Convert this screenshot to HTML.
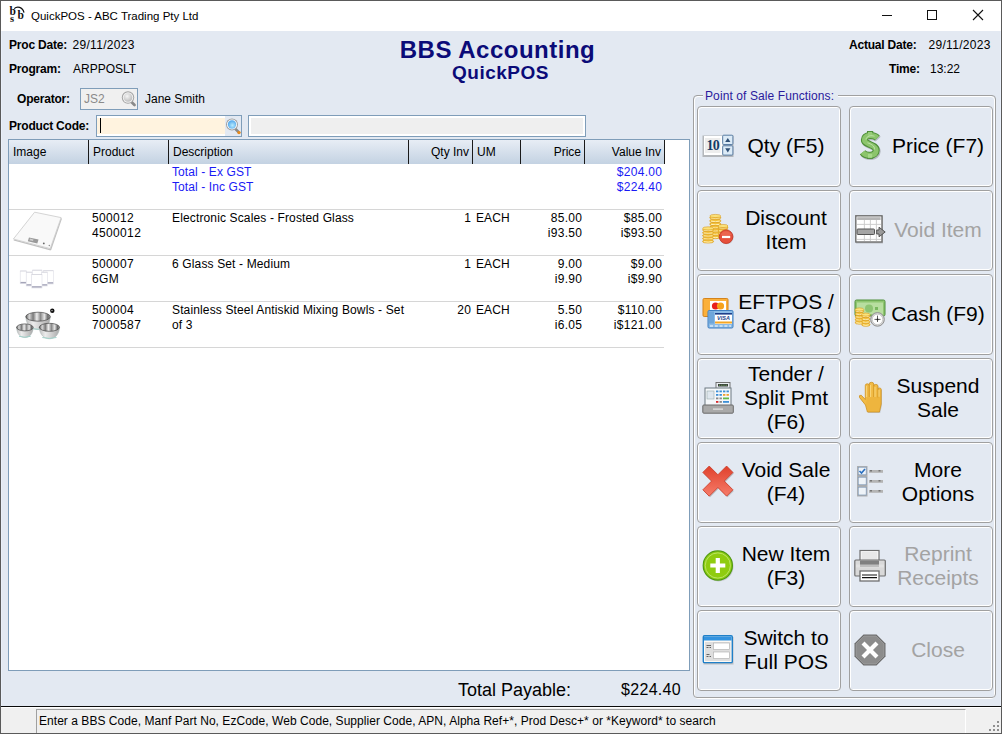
<!DOCTYPE html>
<html><head><meta charset="utf-8"><style>
html,body{margin:0;padding:0;width:1002px;height:734px;overflow:hidden;background:#5a5a5a}
body{position:relative;font-family:"Liberation Sans",sans-serif}
.t{position:absolute;white-space:nowrap;font-family:"Liberation Sans",sans-serif}
svg{overflow:visible}
</style></head><body>
<div style="position:absolute;left:0px;top:0px;width:1002px;height:734px;background:#5a5a5a"></div>
<div style="position:absolute;left:1px;top:1px;width:1000px;height:30px;background:#fff"></div>
<div style="position:absolute;left:1px;top:31px;width:1000px;height:675px;background:#E3E9F2;border-left:1px solid #EAF0FA;border-right:1px solid #EAF0FA;box-sizing:border-box"></div>
<div style="position:absolute;left:1px;top:706px;width:1000px;height:1px;background:#0a0a0a"></div>
<div style="position:absolute;left:1px;top:707px;width:1000px;height:26px;background:#F0F0F0;border-top:1px solid #fff;box-sizing:border-box"></div>
<div class="t" style="left:31px;top:9px;font-size:11.5px;line-height:14px;color:#000;">QuickPOS - ABC Trading Pty Ltd</div>
<svg style="position:absolute;left:0px;top:0px" width="30" height="30" viewBox="0 0 30 30">
<g font-family="Liberation Serif" font-weight="bold" fill="#111">
<text x="9.6" y="14.8" font-size="11.5">b</text>
<text x="10" y="22" font-size="10.5">s</text>
<text x="17.6" y="18.9" font-size="11.5">b</text>
</g>
<path d="M14.2 8.6 C17 6 22.5 6.5 24 12.6" fill="none" stroke="#111" stroke-width="1.2"/>
</svg>
<div style="position:absolute;left:882px;top:15px;width:10px;height:1px;background:#111"></div>
<div style="position:absolute;left:927px;top:10px;width:10px;height:10px;border:1px solid #111;box-sizing:border-box"></div>
<svg style="position:absolute;left:972px;top:9px" width="12" height="12" viewBox="0 0 12 12"><path d="M1 1 L11 11 M11 1 L1 11" stroke="#111" stroke-width="1.1"/></svg>
<div class="t" style="left:9px;top:38px;font-size:12px;line-height:14px;font-weight:bold;color:#000;letter-spacing:-0.2px">Proc Date:</div>
<div class="t" style="left:72.5px;top:38px;font-size:12px;line-height:14px;color:#000;;letter-spacing:0.3px">29/11/2023</div>
<div class="t" style="left:9px;top:62px;font-size:12px;line-height:14px;font-weight:bold;color:#000;letter-spacing:-0.2px">Program:</div>
<div class="t" style="left:73px;top:62px;font-size:12px;line-height:14px;color:#000;">ARPPOSLT</div>
<div class="t" style="left:197.5px;width:600px;text-align:center;top:35px;font-size:24px;line-height:29px;font-weight:bold;color:#0b0b78;letter-spacing:0.5px">BBS Accounting</div>
<div class="t" style="left:200.5px;width:600px;text-align:center;top:61px;font-size:19px;line-height:23px;font-weight:bold;color:#0b0b78;letter-spacing:0.5px">QuickPOS</div>
<div class="t" style="left:849px;top:38px;font-size:12px;line-height:14px;font-weight:bold;color:#000;letter-spacing:-0.2px">Actual Date:</div>
<div class="t" style="left:928.5px;top:38px;font-size:12px;line-height:14px;color:#000;;letter-spacing:0.3px">29/11/2023</div>
<div class="t" style="left:889px;top:62px;font-size:12px;line-height:14px;font-weight:bold;color:#000;letter-spacing:-0.2px">Time:</div>
<div class="t" style="left:930px;top:62px;font-size:12px;line-height:14px;color:#000;">13:22</div>
<div class="t" style="left:17px;top:92px;font-size:12px;line-height:14px;font-weight:bold;color:#000;letter-spacing:-0.2px">Operator:</div>
<div style="position:absolute;left:80px;top:88px;width:58px;height:22px;border:1px solid #7F9DB9;background:#F0F0F0;box-sizing:border-box"></div>
<div class="t" style="left:84px;top:92px;font-size:12px;line-height:14px;color:#8a8a8a;">JS2</div>
<svg style="position:absolute;left:120px;top:90px" width="17" height="18" viewBox="0 0 17 18">
<defs><radialGradient id="gg" cx="0.4" cy="0.35" r="0.75"><stop offset="0" stop-color="#f6f6f6"/><stop offset="1" stop-color="#b4b4b4"/></radialGradient></defs>
<path d="M11.5 12 L14.5 15" stroke="#8a8a8a" stroke-width="2.8" stroke-linecap="round"/>
<circle cx="8" cy="7.5" r="6.2" fill="#a3a3a3"/>
<circle cx="8" cy="7.5" r="5.2" fill="#f3f3f3"/>
<circle cx="8" cy="7.5" r="4.3" fill="url(#gg)"/></svg>
<div class="t" style="left:145px;top:92px;font-size:12px;line-height:14px;color:#000;">Jane Smith</div>
<div class="t" style="left:9px;top:119px;font-size:12px;line-height:14px;font-weight:bold;color:#000;letter-spacing:-0.2px">Product Code:</div>
<div style="position:absolute;left:96px;top:115px;width:146px;height:22px;border:1px solid #7F9DB9;background:#fff;box-sizing:border-box"></div>
<div style="position:absolute;left:97px;top:118px;width:128px;height:16px;background:#FFF3DF"></div>
<div style="position:absolute;left:225px;top:116px;width:16px;height:20px;background:#E3E9F2"></div>
<div style="position:absolute;left:100px;top:118px;width:1px;height:15px;background:#000"></div>
<svg style="position:absolute;left:224px;top:117px" width="17" height="18" viewBox="0 0 17 18">
<defs><radialGradient id="bg1" cx="0.55" cy="0.6" r="0.7"><stop offset="0" stop-color="#b8ecff"/><stop offset="1" stop-color="#3d98e6"/></radialGradient></defs>
<path d="M11.5 12 L14.5 15" stroke="#8a8a8a" stroke-width="2.6" stroke-linecap="round"/>
<circle cx="15" cy="15.6" r="1.7" fill="#e88a1a"/>
<circle cx="8" cy="7.5" r="6" fill="#a0a0a0"/>
<circle cx="8" cy="7.5" r="5" fill="#fff"/>
<circle cx="8" cy="7.5" r="4.2" fill="url(#bg1)"/></svg>
<div style="position:absolute;left:248px;top:115px;width:338px;height:22px;border:1px solid #7F9DB9;background:#fff;box-sizing:border-box"></div>
<div style="position:absolute;left:251px;top:118px;width:332px;height:16px;background:#EFEFEF"></div>
<div style="position:absolute;left:8px;top:139px;width:682px;height:532px;border:1px solid #7F9DB9;background:#fff;box-sizing:border-box"></div>
<div style="position:absolute;left:9px;top:140px;width:655px;height:24px;background:linear-gradient(#E7EDF5,#C3D2E2)"></div>
<div style="position:absolute;left:88px;top:140px;width:1px;height:24px;background:#1a1a1a"></div>
<div style="position:absolute;left:168px;top:140px;width:1px;height:24px;background:#1a1a1a"></div>
<div style="position:absolute;left:408px;top:140px;width:1px;height:24px;background:#1a1a1a"></div>
<div style="position:absolute;left:472px;top:140px;width:1px;height:24px;background:#1a1a1a"></div>
<div style="position:absolute;left:520px;top:140px;width:1px;height:24px;background:#1a1a1a"></div>
<div style="position:absolute;left:584px;top:140px;width:1px;height:24px;background:#1a1a1a"></div>
<div style="position:absolute;left:664px;top:140px;width:1px;height:24px;background:#1a1a1a"></div>
<div class="t" style="left:13px;top:145px;font-size:12px;line-height:14px;color:#000;">Image</div>
<div class="t" style="left:93px;top:145px;font-size:12px;line-height:14px;color:#000;">Product</div>
<div class="t" style="left:173px;top:145px;font-size:12px;line-height:14px;color:#000;">Description</div>
<div class="t" style="right:533px;top:145px;font-size:12px;line-height:14px;color:#000;">Qty Inv</div>
<div class="t" style="left:477px;top:145px;font-size:12px;line-height:14px;color:#000;">UM</div>
<div class="t" style="right:421px;top:145px;font-size:12px;line-height:14px;color:#000;">Price</div>
<div class="t" style="right:341px;top:145px;font-size:12px;line-height:14px;color:#000;">Value Inv</div>
<div class="t" style="left:172px;top:165px;font-size:12px;line-height:14px;color:#1a1af5;;letter-spacing:0.1px">Total - Ex GST</div>
<div class="t" style="left:172px;top:180px;font-size:12px;line-height:14px;color:#1a1af5;;letter-spacing:0.1px">Total - Inc GST</div>
<div class="t" style="right:339.7px;top:165px;font-size:12px;line-height:14px;color:#1a1af5;;letter-spacing:0.3px">$204.00</div>
<div class="t" style="right:339.7px;top:180px;font-size:12px;line-height:14px;color:#1a1af5;;letter-spacing:0.3px">$224.40</div>
<div style="position:absolute;left:9px;top:209px;width:655px;height:1px;background:#D6D6D6"></div>
<div style="position:absolute;left:9px;top:255px;width:655px;height:1px;background:#D6D6D6"></div>
<div style="position:absolute;left:9px;top:301px;width:655px;height:1px;background:#D6D6D6"></div>
<div style="position:absolute;left:9px;top:347px;width:655px;height:1px;background:#D6D6D6"></div>
<div class="t" style="left:92px;top:211px;font-size:12px;line-height:14px;color:#000;;letter-spacing:0.35px">500012</div>
<div class="t" style="left:92px;top:226px;font-size:12px;line-height:14px;color:#000;;letter-spacing:0.35px">4500012</div>
<div class="t" style="left:172px;top:211px;font-size:12px;line-height:14px;color:#000;;letter-spacing:0.14px">Electronic Scales - Frosted Glass</div>
<div class="t" style="right:530.7px;top:211px;font-size:12px;line-height:14px;color:#000;;letter-spacing:0.3px">1</div>
<div class="t" style="left:476px;top:211px;font-size:12px;line-height:14px;color:#000;;letter-spacing:0.1px">EACH</div>
<div class="t" style="right:419.7px;top:211px;font-size:12px;line-height:14px;color:#000;;letter-spacing:0.3px">85.00</div>
<div class="t" style="right:419.7px;top:226px;font-size:12px;line-height:14px;color:#000;;letter-spacing:0.3px">i93.50</div>
<div class="t" style="right:339.7px;top:211px;font-size:12px;line-height:14px;color:#000;;letter-spacing:0.3px">$85.00</div>
<div class="t" style="right:339.7px;top:226px;font-size:12px;line-height:14px;color:#000;;letter-spacing:0.3px">i$93.50</div>
<div class="t" style="left:92px;top:257px;font-size:12px;line-height:14px;color:#000;;letter-spacing:0.35px">500007</div>
<div class="t" style="left:92px;top:272px;font-size:12px;line-height:14px;color:#000;;letter-spacing:0.35px">6GM</div>
<div class="t" style="left:172px;top:257px;font-size:12px;line-height:14px;color:#000;;letter-spacing:0.14px">6 Glass Set - Medium</div>
<div class="t" style="right:530.7px;top:257px;font-size:12px;line-height:14px;color:#000;;letter-spacing:0.3px">1</div>
<div class="t" style="left:476px;top:257px;font-size:12px;line-height:14px;color:#000;;letter-spacing:0.1px">EACH</div>
<div class="t" style="right:419.7px;top:257px;font-size:12px;line-height:14px;color:#000;;letter-spacing:0.3px">9.00</div>
<div class="t" style="right:419.7px;top:272px;font-size:12px;line-height:14px;color:#000;;letter-spacing:0.3px">i9.90</div>
<div class="t" style="right:339.7px;top:257px;font-size:12px;line-height:14px;color:#000;;letter-spacing:0.3px">$9.00</div>
<div class="t" style="right:339.7px;top:272px;font-size:12px;line-height:14px;color:#000;;letter-spacing:0.3px">i$9.90</div>
<div class="t" style="left:92px;top:303px;font-size:12px;line-height:14px;color:#000;;letter-spacing:0.35px">500004</div>
<div class="t" style="left:92px;top:318px;font-size:12px;line-height:14px;color:#000;;letter-spacing:0.35px">7000587</div>
<div class="t" style="left:172px;top:303px;font-size:12px;line-height:14px;color:#000;;letter-spacing:0.14px">Stainless Steel Antiskid Mixing Bowls - Set</div>
<div class="t" style="left:172px;top:318px;font-size:12px;line-height:14px;color:#000;;letter-spacing:0.14px">of 3</div>
<div class="t" style="right:530.7px;top:303px;font-size:12px;line-height:14px;color:#000;;letter-spacing:0.3px">20</div>
<div class="t" style="left:476px;top:303px;font-size:12px;line-height:14px;color:#000;;letter-spacing:0.1px">EACH</div>
<div class="t" style="right:419.7px;top:303px;font-size:12px;line-height:14px;color:#000;;letter-spacing:0.3px">5.50</div>
<div class="t" style="right:419.7px;top:318px;font-size:12px;line-height:14px;color:#000;;letter-spacing:0.3px">i6.05</div>
<div class="t" style="right:339.7px;top:303px;font-size:12px;line-height:14px;color:#000;;letter-spacing:0.3px">$110.00</div>
<div class="t" style="right:339.7px;top:318px;font-size:12px;line-height:14px;color:#000;;letter-spacing:0.3px">i$121.00</div>
<svg style="position:absolute;left:12px;top:210px" width="52" height="42" viewBox="0 0 52 42">
<path d="M1.8 29.8 L38.2 39.6 L49.4 8.4 L38.6 39.8" fill="none" stroke="#c0c0c0" stroke-width="1.3"/>
<path d="M22.6 2.2 L49.1 7.6 L38.2 38.6 L1.4 29 Z" fill="#f9f9f9" stroke="#cfcfcf" stroke-width="0.9"/>
<path d="M17 27.5 L26.5 29.6 L25.3 33.4 L15.8 31.2 Z" fill="#9a9a9a"/>
<path d="M18 28.6 L21.5 29.4 L21 31 L17.5 30.2 Z" fill="#d0d0d0"/>
<circle cx="31.8" cy="33.4" r="0.9" fill="#666"/><circle cx="37.3" cy="35.5" r="0.7" fill="#888"/>
</svg>
<svg style="position:absolute;left:18px;top:266px" width="40" height="28" viewBox="0 0 40 28"><rect x="2.2" y="5" width="6.3" height="12.7" fill="#fff" stroke="#dedee6" stroke-width="0.6"/><rect x="2.5" y="15.899999999999999" width="5.7" height="1.4" fill="#a4a4b8"/><path d="M2.2 5 H8.5" stroke="#d2d2da" stroke-width="0.7"/><rect x="14.5" y="4.2" width="9.5" height="11.8" fill="#fff" stroke="#dedee6" stroke-width="0.6"/><rect x="14.8" y="14.2" width="8.9" height="1.4" fill="#a4a4b8"/><path d="M14.5 4.2 H24" stroke="#d2d2da" stroke-width="0.7"/><rect x="25.4" y="4.7" width="10.0" height="13.3" fill="#fff" stroke="#dedee6" stroke-width="0.6"/><rect x="25.7" y="16.2" width="9.4" height="1.4" fill="#a4a4b8"/><path d="M25.4 4.7 H35.4" stroke="#d2d2da" stroke-width="0.7"/><rect x="8.2" y="6.2" width="5.800000000000001" height="13.8" fill="#fff" stroke="#dedee6" stroke-width="0.6"/><rect x="8.5" y="18.2" width="5.200000000000001" height="1.4" fill="#a4a4b8"/><path d="M8.2 6.2 H14" stroke="#d2d2da" stroke-width="0.7"/><rect x="23.7" y="6.2" width="5.699999999999999" height="13.8" fill="#fff" stroke="#dedee6" stroke-width="0.6"/><rect x="24.0" y="18.2" width="5.1" height="1.4" fill="#a4a4b8"/><path d="M23.7 6.2 H29.4" stroke="#d2d2da" stroke-width="0.7"/><rect x="13.7" y="8.5" width="10.3" height="13.5" fill="#fff" stroke="#dedee6" stroke-width="0.6"/><rect x="14.0" y="20.2" width="9.700000000000001" height="1.4" fill="#a4a4b8"/><path d="M13.7 8.5 H24" stroke="#d2d2da" stroke-width="0.7"/></svg>
<svg style="position:absolute;left:14px;top:306px" width="48" height="36" viewBox="0 0 48 36"><defs><linearGradient id="bo" x1="0" y1="0" x2="1" y2="0"><stop offset="0" stop-color="#bdbdbd"/><stop offset="0.3" stop-color="#ececec"/><stop offset="0.6" stop-color="#d0d0d0"/><stop offset="1" stop-color="#a8a8a8"/></linearGradient><linearGradient id="bi" x1="0" y1="0" x2="1" y2="0"><stop offset="0" stop-color="#5a5a5a"/><stop offset="0.14" stop-color="#d8d8d8"/><stop offset="0.3" stop-color="#7a7a7a"/><stop offset="0.45" stop-color="#eeeeee"/><stop offset="0.6" stop-color="#8a8a8a"/><stop offset="0.76" stop-color="#e6e6e6"/><stop offset="0.9" stop-color="#6a6a6a"/><stop offset="1" stop-color="#a8a8a8"/></linearGradient></defs><circle cx="38.3" cy="4.8" r="2.2" fill="#111"/><circle cx="38" cy="4.6" r="0.7" fill="#ddd"/><path d="M11.8 10.7 C12.200000000000001 27.90 35.9 27.90 36.3 10.7 Z" fill="url(#bo)" stroke="#a8b4b4" stroke-width="0.5"/><path d="M15.48 22.30 Q24.05 24.20 32.62 22.30" stroke="#9fd0c8" stroke-width="1" fill="none"/><ellipse cx="24.05" cy="10.7" rx="12.25" ry="4.5" fill="url(#bi)" stroke="#4a4a4a" stroke-width="0.7"/><path d="M2.5999999999999996 21.4 C2.9999999999999996 35.00 18.800000000000004 35.00 19.200000000000003 21.4 Z" fill="url(#bo)" stroke="#a8b4b4" stroke-width="0.5"/><path d="M5.09 30.30 Q10.9 32.20 16.71 30.30" stroke="#9fd0c8" stroke-width="1" fill="none"/><ellipse cx="10.9" cy="21.4" rx="8.3" ry="3.5" fill="url(#bi)" stroke="#4a4a4a" stroke-width="0.7"/><path d="M25.299999999999997 21.3 C25.699999999999996 36.63 45.1 36.63 45.5 21.3 Z" fill="url(#bo)" stroke="#a8b4b4" stroke-width="0.5"/><path d="M28.33 31.50 Q35.4 33.40 42.47 31.50" stroke="#9fd0c8" stroke-width="1" fill="none"/><ellipse cx="35.4" cy="21.3" rx="10.1" ry="4" fill="url(#bi)" stroke="#4a4a4a" stroke-width="0.7"/></svg>
<div class="t" style="left:458px;top:679px;font-size:18px;line-height:22px;color:#000;">Total Payable:</div>
<div class="t" style="right:321px;top:680px;font-size:16px;line-height:19px;color:#000;letter-spacing:0.3px">$224.40</div>
<div style="position:absolute;left:36px;top:709px;width:930px;height:24px;border-top:1px solid #A0A0A0;border-left:1px solid #A0A0A0;border-right:1px solid #fff;box-sizing:border-box;background:#F0F0F0"></div>
<div class="t" style="left:39px;top:714px;font-size:12px;line-height:14px;color:#000;letter-spacing:0.04px">Enter a BBS Code, Manf Part No, EzCode, Web Code, Supplier Code, APN, Alpha Ref+*, Prod Desc+* or *Keyword* to search</div>
<div style="position:absolute;left:997px;top:721px;width:2px;height:2px;background:#8f8f8f"></div>
<div style="position:absolute;left:993px;top:725px;width:2px;height:2px;background:#8f8f8f"></div>
<div style="position:absolute;left:997px;top:725px;width:2px;height:2px;background:#8f8f8f"></div>
<div style="position:absolute;left:989px;top:729px;width:2px;height:2px;background:#8f8f8f"></div>
<div style="position:absolute;left:993px;top:729px;width:2px;height:2px;background:#8f8f8f"></div>
<div style="position:absolute;left:997px;top:729px;width:2px;height:2px;background:#8f8f8f"></div>
<div style="position:absolute;left:694px;top:96px;width:301px;height:603px;border:1px solid #fff;border-radius:4px;box-sizing:border-box"></div>
<div style="position:absolute;left:693px;top:95px;width:303px;height:603px;border:1px solid #A0A0A0;border-radius:4px;box-sizing:border-box"></div>
<div style="position:absolute;left:703px;top:88px;width:135px;height:14px;background:#E3E9F2"></div>
<div class="t" style="left:705px;top:89px;font-size:12px;line-height:14px;color:#2a1a9c;letter-spacing:0.1px">Point of Sale Functions:</div>
<div style="position:absolute;left:697px;top:106px;width:144px;height:81px;border:1px solid #A0A0A0;border-radius:4px;box-shadow:inset 1px 1px 0 #fff, inset -1px -1px 0 #fff;box-sizing:border-box"></div>
<div class="t" style="left:726px;width:120px;text-align:center;top:133.5px;font-size:21px;line-height:24px;color:#000">Qty (F5)</div>
<svg style="position:absolute;left:702px;top:130px" width="32" height="32" viewBox="0 0 32 32">
<rect x="0.5" y="5.5" width="31" height="21.5" fill="#8e8e8e" opacity="0.55"/>
<rect x="2" y="6" width="18.5" height="19" fill="#fff"/>
<rect x="3" y="8" width="15.5" height="15" fill="#e6e6e6" opacity="0.7"/>
<text x="10.8" y="20" text-anchor="middle" font-family="Liberation Serif" font-weight="bold" font-size="14" fill="#123a66" letter-spacing="-0.6">10</text>
<rect x="20.7" y="5.2" width="10.2" height="9.3" rx="1" fill="#dcebf7" stroke="#5b7ea5" stroke-width="1"/>
<rect x="20.7" y="15.8" width="10.2" height="9.3" rx="1" fill="#dcebf7" stroke="#5b7ea5" stroke-width="1"/>
<path d="M23.2 12 L25.8 8 L28.4 12 Z" fill="#2f4f75"/>
<path d="M23.2 18.2 L25.8 22.4 L28.4 18.2 Z" fill="#2f4f75"/>
</svg>
<div style="position:absolute;left:849px;top:106px;width:144px;height:81px;border:1px solid #A0A0A0;border-radius:4px;box-shadow:inset 1px 1px 0 #fff, inset -1px -1px 0 #fff;box-sizing:border-box"></div>
<div class="t" style="left:878px;width:120px;text-align:center;top:133.5px;font-size:21px;line-height:24px;color:#000">Price (F7)</div>
<svg style="position:absolute;left:854px;top:130px" width="32" height="32" viewBox="0 0 32 32">
<path d="M23.2 8 C20 4.6 10.8 4.4 10.4 9.8 C10 14.8 22.4 14.2 22.2 20.3 C22 26.4 12 26.6 8.6 22.3" transform="translate(1,1.2)" opacity="0.2" fill="none" stroke="#000" stroke-width="7"/>
<rect x="13" y="1" width="6.2" height="5" fill="#4f8f3a"/>
<rect x="13" y="23.8" width="6.2" height="5" fill="#4f8f3a"/>
<path d="M23.2 8 C20 4.6 10.8 4.4 10.4 9.8 C10 14.8 22.4 14.2 22.2 20.3 C22 26.4 12 26.6 8.6 22.3" fill="none" stroke="#4f8f3a" stroke-width="7"/>
<path d="M23.2 8 C20 4.6 10.8 4.4 10.4 9.8 C10 14.8 22.4 14.2 22.2 20.3 C22 26.4 12 26.6 8.6 22.3" fill="none" stroke="#8cc56c" stroke-width="5"/>
<rect x="14" y="2" width="4.2" height="4" fill="#98cd7a"/>
<rect x="14" y="24" width="4.2" height="3.8" fill="#a6d889"/>
<path d="M20.5 6.2 C17 5.2 12.5 5.8 12 9.5 M13.5 12.8 C17 14 20.6 15.5 20.6 19.5" fill="none" stroke="#d8f0c8" stroke-width="0.8" opacity="0.8"/>
</svg>
<div style="position:absolute;left:697px;top:190px;width:144px;height:81px;border:1px solid #A0A0A0;border-radius:4px;box-shadow:inset 1px 1px 0 #fff, inset -1px -1px 0 #fff;box-sizing:border-box"></div>
<div class="t" style="left:726px;width:120px;text-align:center;top:205.5px;font-size:21px;line-height:24px;color:#000">Discount<br>Item</div>
<svg style="position:absolute;left:702px;top:214px" width="32" height="32" viewBox="0 0 32 32"><rect x="7.8" y="1.90" width="11" height="3.60" rx="5.50" ry="1.4" fill="#f3c13c" stroke="#d99a1e" stroke-width="0.6"/><path d="M9.0 3.88 Q13.3 5.10 17.6 3.88" stroke="#fff6c8" stroke-width="0.9" fill="none"/><rect x="7.8" y="5.10" width="11" height="3.60" rx="5.50" ry="1.4" fill="#f3c13c" stroke="#d99a1e" stroke-width="0.6"/><path d="M9.0 7.08 Q13.3 8.30 17.6 7.08" stroke="#fff6c8" stroke-width="0.9" fill="none"/><rect x="7.8" y="8.30" width="11" height="3.60" rx="5.50" ry="1.4" fill="#f3c13c" stroke="#d99a1e" stroke-width="0.6"/><path d="M9.0 10.28 Q13.3 11.50 17.6 10.28" stroke="#fff6c8" stroke-width="0.9" fill="none"/><rect x="7.8" y="11.50" width="11" height="3.60" rx="5.50" ry="1.4" fill="#f3c13c" stroke="#d99a1e" stroke-width="0.6"/><path d="M9.0 13.48 Q13.3 14.70 17.6 13.48" stroke="#fff6c8" stroke-width="0.9" fill="none"/><rect x="7.8" y="14.70" width="11" height="3.60" rx="5.50" ry="1.4" fill="#f3c13c" stroke="#d99a1e" stroke-width="0.6"/><path d="M9.0 16.68 Q13.3 17.90 17.6 16.68" stroke="#fff6c8" stroke-width="0.9" fill="none"/><rect x="7.8" y="17.90" width="11" height="3.60" rx="5.50" ry="1.4" fill="#f3c13c" stroke="#d99a1e" stroke-width="0.6"/><path d="M9.0 19.88 Q13.3 21.10 17.6 19.88" stroke="#fff6c8" stroke-width="0.9" fill="none"/><rect x="7.8" y="21.10" width="11" height="3.60" rx="5.50" ry="1.4" fill="#f3c13c" stroke="#d99a1e" stroke-width="0.6"/><path d="M9.0 23.08 Q13.3 24.30 17.6 23.08" stroke="#fff6c8" stroke-width="0.9" fill="none"/><ellipse cx="13.3" cy="2.0" rx="5.5" ry="1.6" fill="#fbe27a" stroke="#d99a1e" stroke-width="0.6"/><rect x="16" y="11.90" width="10" height="3.42" rx="5.00" ry="1.4" fill="#f3c13c" stroke="#d99a1e" stroke-width="0.6"/><path d="M17.2 13.78 Q21.0 14.93 24.8 13.78" stroke="#fff6c8" stroke-width="0.9" fill="none"/><rect x="16" y="14.93" width="10" height="3.42" rx="5.00" ry="1.4" fill="#f3c13c" stroke="#d99a1e" stroke-width="0.6"/><path d="M17.2 16.80 Q21.0 17.95 24.8 16.80" stroke="#fff6c8" stroke-width="0.9" fill="none"/><rect x="16" y="17.95" width="10" height="3.42" rx="5.00" ry="1.4" fill="#f3c13c" stroke="#d99a1e" stroke-width="0.6"/><path d="M17.2 19.83 Q21.0 20.97 24.8 19.83" stroke="#fff6c8" stroke-width="0.9" fill="none"/><rect x="16" y="20.98" width="10" height="3.42" rx="5.00" ry="1.4" fill="#f3c13c" stroke="#d99a1e" stroke-width="0.6"/><path d="M17.2 22.85 Q21.0 24.00 24.8 22.85" stroke="#fff6c8" stroke-width="0.9" fill="none"/><ellipse cx="21.0" cy="12.0" rx="5.0" ry="1.6" fill="#fbe27a" stroke="#d99a1e" stroke-width="0.6"/><rect x="0.6" y="14.30" width="11" height="3.28" rx="5.50" ry="1.4" fill="#f3c13c" stroke="#d99a1e" stroke-width="0.6"/><path d="M1.7999999999999998 16.09 Q6.1 17.18 10.4 16.09" stroke="#fff6c8" stroke-width="0.9" fill="none"/><rect x="0.6" y="17.18" width="11" height="3.28" rx="5.50" ry="1.4" fill="#f3c13c" stroke="#d99a1e" stroke-width="0.6"/><path d="M1.7999999999999998 18.97 Q6.1 20.06 10.4 18.97" stroke="#fff6c8" stroke-width="0.9" fill="none"/><rect x="0.6" y="20.06" width="11" height="3.28" rx="5.50" ry="1.4" fill="#f3c13c" stroke="#d99a1e" stroke-width="0.6"/><path d="M1.7999999999999998 21.85 Q6.1 22.94 10.4 21.85" stroke="#fff6c8" stroke-width="0.9" fill="none"/><rect x="0.6" y="22.94" width="11" height="3.28" rx="5.50" ry="1.4" fill="#f3c13c" stroke="#d99a1e" stroke-width="0.6"/><path d="M1.7999999999999998 24.73 Q6.1 25.82 10.4 24.73" stroke="#fff6c8" stroke-width="0.9" fill="none"/><rect x="0.6" y="25.82" width="11" height="3.28" rx="5.50" ry="1.4" fill="#f3c13c" stroke="#d99a1e" stroke-width="0.6"/><path d="M1.7999999999999998 27.61 Q6.1 28.70 10.4 27.61" stroke="#fff6c8" stroke-width="0.9" fill="none"/><ellipse cx="6.1" cy="14.4" rx="5.5" ry="1.6" fill="#fbe27a" stroke="#d99a1e" stroke-width="0.6"/>
<circle cx="24.6" cy="23.2" r="7" fill="#888" opacity="0.3"/>
<circle cx="24.1" cy="22.7" r="6.8" fill="#e6503c" stroke="#c2301f" stroke-width="0.8"/>
<path d="M18.5 21 A6 6 0 0 1 29.7 21" fill="#f07a62" opacity="0.5"/>
<rect x="20" y="21.8" width="8.2" height="2.3" fill="#fff"/>
</svg>
<div style="position:absolute;left:849px;top:190px;width:144px;height:81px;border:1px solid #A0A0A0;border-radius:4px;box-shadow:inset 1px 1px 0 #fff, inset -1px -1px 0 #fff;box-sizing:border-box"></div>
<div class="t" style="left:878px;width:120px;text-align:center;top:217.5px;font-size:21px;line-height:24px;color:#A3A3A3">Void Item</div>
<svg style="position:absolute;left:854px;top:214px" width="32" height="32" viewBox="0 0 32 32">
<rect x="2" y="2" width="27" height="27.5" fill="#777" opacity="0.35"/>
<rect x="1.8" y="1.8" width="26.2" height="26.2" fill="#fff" stroke="#6e6e6e" stroke-width="1.4"/>
<rect x="3.2" y="3.2" width="23.4" height="2.8" fill="#b5b5b5"/>
<path d="M3 10.4 H27 M3 25.4 H27 M10.4 6 V27 M16.4 6 V27 M22.4 6 V27" stroke="#c8c8c8" stroke-width="0.9"/>
<rect x="3.1" y="15" width="17.4" height="5.5" rx="0.8" fill="#a5a5a5" stroke="#555" stroke-width="1"/>
<path d="M22.7 16 H25 V13.2 L31.2 18 L25 22.8 V20 H22.7 Z" fill="#9a9a9a" stroke="#4a4a4a" stroke-width="0.9"/>
</svg>
<div style="position:absolute;left:697px;top:274px;width:144px;height:81px;border:1px solid #A0A0A0;border-radius:4px;box-shadow:inset 1px 1px 0 #fff, inset -1px -1px 0 #fff;box-sizing:border-box"></div>
<div class="t" style="left:726px;width:120px;text-align:center;top:289.5px;font-size:21px;line-height:24px;color:#000">EFTPOS /<br>Card (F8)</div>
<svg style="position:absolute;left:702px;top:298px" width="32" height="32" viewBox="0 0 32 32">
<rect x="1" y="0.5" width="25" height="18" rx="1.2" fill="#fbb03b" stroke="#d4831c" stroke-width="1"/>
<rect x="8" y="3" width="16" height="10" fill="#fff"/>
<circle cx="13.5" cy="8" r="3.6" fill="#e8201e"/><circle cx="18.5" cy="8" r="3.6" fill="#f7a21c"/>
<rect x="6" y="12.5" width="25" height="17.5" rx="1.2" fill="#8bbbe6" stroke="#3f7fc1" stroke-width="1"/>
<rect x="7" y="13.5" width="5" height="12" fill="#6ea6da"/>
<rect x="13" y="15" width="17" height="11" fill="#fff"/>
<rect x="13" y="15" width="17" height="1.6" fill="#1d3f8a"/>
<rect x="13" y="23.5" width="17" height="2" fill="#f5a623"/>
<text x="21.5" y="22" text-anchor="middle" font-family="Liberation Sans" font-weight="bold" font-style="italic" font-size="5.5" fill="#1d3f8a">VISA</text>
<path d="M8 28 H29" stroke="#fff" stroke-width="1" stroke-dasharray="3 1.8"/>
</svg>
<div style="position:absolute;left:849px;top:274px;width:144px;height:81px;border:1px solid #A0A0A0;border-radius:4px;box-shadow:inset 1px 1px 0 #fff, inset -1px -1px 0 #fff;box-sizing:border-box"></div>
<div class="t" style="left:878px;width:120px;text-align:center;top:301.5px;font-size:21px;line-height:24px;color:#000">Cash (F9)</div>
<svg style="position:absolute;left:854px;top:298px" width="32" height="32" viewBox="0 0 32 32">
<rect x="1" y="2" width="30" height="16" rx="1.5" fill="#8fc670" stroke="#4f8f3a" stroke-width="1"/>
<rect x="3" y="4.5" width="26" height="11.5" fill="#b8dea0"/>
<circle cx="15" cy="10.5" r="4" fill="#8dc472"/>
<rect x="21" y="9" width="3" height="3" fill="#7ab85f"/>
<rect x="1.1" y="11.40" width="8.7" height="3.28" rx="4.35" ry="1.4" fill="#f3c13c" stroke="#d99a1e" stroke-width="0.6"/><path d="M2.3 13.19 Q5.449999999999999 14.28 8.6 13.19" stroke="#fff6c8" stroke-width="0.9" fill="none"/><rect x="1.1" y="14.28" width="8.7" height="3.28" rx="4.35" ry="1.4" fill="#f3c13c" stroke="#d99a1e" stroke-width="0.6"/><path d="M2.3 16.07 Q5.449999999999999 17.16 8.6 16.07" stroke="#fff6c8" stroke-width="0.9" fill="none"/><rect x="1.1" y="17.16" width="8.7" height="3.28" rx="4.35" ry="1.4" fill="#f3c13c" stroke="#d99a1e" stroke-width="0.6"/><path d="M2.3 18.95 Q5.449999999999999 20.04 8.6 18.95" stroke="#fff6c8" stroke-width="0.9" fill="none"/><rect x="1.1" y="20.04" width="8.7" height="3.28" rx="4.35" ry="1.4" fill="#f3c13c" stroke="#d99a1e" stroke-width="0.6"/><path d="M2.3 21.83 Q5.449999999999999 22.92 8.6 21.83" stroke="#fff6c8" stroke-width="0.9" fill="none"/><rect x="1.1" y="22.92" width="8.7" height="3.28" rx="4.35" ry="1.4" fill="#f3c13c" stroke="#d99a1e" stroke-width="0.6"/><path d="M2.3 24.71 Q5.449999999999999 25.80 8.6 24.71" stroke="#fff6c8" stroke-width="0.9" fill="none"/><ellipse cx="5.449999999999999" cy="11.5" rx="4.35" ry="1.6" fill="#fbe27a" stroke="#d99a1e" stroke-width="0.6"/><rect x="7.7" y="16.50" width="8.3" height="3.25" rx="4.15" ry="1.4" fill="#f3c13c" stroke="#d99a1e" stroke-width="0.6"/><path d="M8.9 18.27 Q11.850000000000001 19.35 14.8 18.27" stroke="#fff6c8" stroke-width="0.9" fill="none"/><rect x="7.7" y="19.35" width="8.3" height="3.25" rx="4.15" ry="1.4" fill="#f3c13c" stroke="#d99a1e" stroke-width="0.6"/><path d="M8.9 21.12 Q11.850000000000001 22.20 14.8 21.12" stroke="#fff6c8" stroke-width="0.9" fill="none"/><rect x="7.7" y="22.20" width="8.3" height="3.25" rx="4.15" ry="1.4" fill="#f3c13c" stroke="#d99a1e" stroke-width="0.6"/><path d="M8.9 23.97 Q11.850000000000001 25.05 14.8 23.97" stroke="#fff6c8" stroke-width="0.9" fill="none"/><rect x="7.7" y="25.05" width="8.3" height="3.25" rx="4.15" ry="1.4" fill="#f3c13c" stroke="#d99a1e" stroke-width="0.6"/><path d="M8.9 26.82 Q11.850000000000001 27.90 14.8 26.82" stroke="#fff6c8" stroke-width="0.9" fill="none"/><ellipse cx="11.850000000000001" cy="16.6" rx="4.15" ry="1.6" fill="#fbe27a" stroke="#d99a1e" stroke-width="0.6"/>
<circle cx="23.5" cy="21.4" r="6.8" fill="#d8d8d8" stroke="#8e8e8e" stroke-width="1"/>
<circle cx="23.5" cy="21.4" r="5.2" fill="#fff" stroke="#b5b5b5" stroke-width="0.6"/>
<path d="M23.5 17.6 V24 M20.5 21.4 H26.5" stroke="#333" stroke-width="0.8" fill="none"/><circle cx="23.5" cy="21.4" r="0.9" fill="#222"/>
</svg>
<div style="position:absolute;left:697px;top:358px;width:144px;height:81px;border:1px solid #A0A0A0;border-radius:4px;box-shadow:inset 1px 1px 0 #fff, inset -1px -1px 0 #fff;box-sizing:border-box"></div>
<div class="t" style="left:726px;width:120px;text-align:center;top:361.5px;font-size:21px;line-height:24px;color:#000">Tender /<br>Split Pmt<br>(F6)</div>
<svg style="position:absolute;left:702px;top:382px" width="32" height="32" viewBox="0 0 32 32">
<rect x="14" y="0.5" width="14" height="6" fill="#e9eef2" stroke="#666" stroke-width="0.9"/>
<rect x="16" y="2" width="10" height="2.5" fill="#3a3a3a"/>
<path d="M17 3.2 H25" stroke="#7bd36a" stroke-width="0.8" stroke-dasharray="1 0.8"/>
<rect x="3" y="6" width="26" height="18" fill="#f5f8fb" stroke="#6d7880" stroke-width="1"/>
<rect x="5" y="9" width="7" height="8" fill="#dfe7ee" stroke="#9aa" stroke-width="0.6"/>
<g fill="#3d8fd6"><rect x="14" y="8.5" width="2.4" height="1.8"/><rect x="17.5" y="8.5" width="2.4" height="1.8"/><rect x="21" y="8.5" width="2.4" height="1.8"/><rect x="24.5" y="8.5" width="2.4" height="1.8"/>
<rect x="14" y="12" width="2.4" height="1.8"/><rect x="17.5" y="12" width="2.4" height="1.8"/><rect x="21" y="12" width="2.4" height="1.8" fill="#f0a030"/><rect x="24.5" y="12" width="2.4" height="1.8" fill="#f0a030"/></g>
<rect x="14" y="15.5" width="2.4" height="1.8" fill="#888"/><rect x="17.5" y="15.5" width="2.4" height="1.8" fill="#888"/><rect x="21" y="15.5" width="6" height="1.8" fill="#63b84a"/>
<rect x="14" y="19" width="2.4" height="1.8" fill="#d8282a"/><rect x="17.5" y="19" width="2.4" height="1.8" fill="#888"/><rect x="21" y="19" width="6" height="1.8" fill="#3d8fd6"/>
<rect x="0.8" y="23" width="30.5" height="8.2" rx="1" fill="#a9a9a9" stroke="#6a6a6a" stroke-width="1"/>
<rect x="11" y="26.5" width="10" height="1.2" fill="#e6e6e6"/>
</svg>
<div style="position:absolute;left:849px;top:358px;width:144px;height:81px;border:1px solid #A0A0A0;border-radius:4px;box-shadow:inset 1px 1px 0 #fff, inset -1px -1px 0 #fff;box-sizing:border-box"></div>
<div class="t" style="left:878px;width:120px;text-align:center;top:373.5px;font-size:21px;line-height:24px;color:#000">Suspend<br>Sale</div>
<svg style="position:absolute;left:854px;top:382px" width="32" height="32" viewBox="0 0 32 32">
<path d="M13.4 30 L11.5 23 L5.5 15.5 Q4.6 13 7.2 13.2 L11.3 17.5 V3.5 Q11.3 1.8 13.25 1.8 Q15.2 1.8 15.2 3.5 V2 Q15.2 0.3 17.45 0.3 Q19.7 0.3 19.7 2 V4 Q19.7 2.4 21.8 2.4 Q23.9 2.4 23.9 4 V7.5 Q23.9 6 25.55 6 Q27.2 6 27.2 7.5 V22 L25.4 30 Z" fill="#777" opacity="0.3" transform="translate(0.8,1)"/>
<path d="M13.4 30 L11.5 23 L5.5 15.5 Q4.6 13 7.2 13.2 L11.3 17.5 V3.5 Q11.3 1.8 13.25 1.8 Q15.2 1.8 15.2 3.5 V2 Q15.2 0.3 17.45 0.3 Q19.7 0.3 19.7 2 V4 Q19.7 2.4 21.8 2.4 Q23.9 2.4 23.9 4 V7.5 Q23.9 6 25.55 6 Q27.2 6 27.2 7.5 V22 L25.4 30 Z" fill="#f2bb45" stroke="#cf921f" stroke-width="0.8"/>
<path d="M15.2 3.5 V15 M19.7 4 V15 M23.9 7.5 V15.5" stroke="#cf921f" stroke-width="0.8"/>
<path d="M12.4 4 V15 M16.6 3 V15 M21 5 V15 M25 8 V15" stroke="#fde7a0" stroke-width="0.8" opacity="0.8"/>
<path d="M13 15.5 L27 14.5 V22 L25.4 29.5 H13.6 L12 23 Z" fill="#e3a42c" opacity="0.25"/>
</svg>
<div style="position:absolute;left:697px;top:442px;width:144px;height:81px;border:1px solid #A0A0A0;border-radius:4px;box-shadow:inset 1px 1px 0 #fff, inset -1px -1px 0 #fff;box-sizing:border-box"></div>
<div class="t" style="left:726px;width:120px;text-align:center;top:457.5px;font-size:21px;line-height:24px;color:#000">Void Sale<br>(F4)</div>
<svg style="position:absolute;left:702px;top:466px" width="32" height="32" viewBox="0 0 32 32">
<defs><linearGradient id="xg" x1="0" y1="0" x2="0" y2="1"><stop offset="0" stop-color="#e0412c"/><stop offset="1" stop-color="#f67c6a"/></linearGradient></defs>
<polygon points="0.84,6.40 9.54,15.10 0.84,23.80 7.20,30.16 15.90,21.46 24.60,30.16 30.96,23.80 22.26,15.10 30.96,6.40 24.60,0.04 15.90,8.74 7.20,0.04" fill="#6a6a6a" opacity="0.35" transform="translate(0.9,1.1)"/>
<polygon points="0.84,6.40 9.54,15.10 0.84,23.80 7.20,30.16 15.90,21.46 24.60,30.16 30.96,23.80 22.26,15.10 30.96,6.40 24.60,0.04 15.90,8.74 7.20,0.04" fill="url(#xg)" stroke="#c93a27" stroke-width="0.8" stroke-linejoin="round"/>
</svg>
<div style="position:absolute;left:849px;top:442px;width:144px;height:81px;border:1px solid #A0A0A0;border-radius:4px;box-shadow:inset 1px 1px 0 #fff, inset -1px -1px 0 #fff;box-sizing:border-box"></div>
<div class="t" style="left:878px;width:120px;text-align:center;top:457.5px;font-size:21px;line-height:24px;color:#000">More<br>Options</div>
<svg style="position:absolute;left:854px;top:466px" width="32" height="32" viewBox="0 0 32 32">
<rect x="3" y="0" width="10.5" height="10" fill="#b0b0b0"/>
<rect x="4.2" y="1.2" width="8" height="7.6" fill="#eef3f8" stroke="#7a96b6" stroke-width="0.7"/>
<path d="M5.5 5 L7.5 7 L11 3" stroke="#2a6fc0" stroke-width="1.6" fill="none"/>
<rect x="3" y="10" width="10.5" height="10" fill="#b0b0b0"/>
<rect x="4.2" y="11.2" width="8" height="7.6" fill="#eef3f8" stroke="#7a96b6" stroke-width="0.7"/>
<rect x="3" y="20" width="10.5" height="10.5" fill="#b0b0b0"/>
<rect x="4.2" y="21.2" width="8" height="7.8" fill="#eef3f8" stroke="#7a96b6" stroke-width="0.7"/>
<rect x="15" y="4" width="14" height="2.8" fill="#b4b4b4"/><rect x="16" y="4.2" width="2" height="1.2" fill="#666"/><rect x="24.5" y="4.2" width="2" height="1.2" fill="#666"/>
<rect x="15" y="14" width="14" height="2.8" fill="#b4b4b4"/><rect x="16" y="14.2" width="2" height="1.2" fill="#666"/><rect x="24.5" y="14.2" width="2" height="1.2" fill="#666"/>
<rect x="15" y="24" width="14" height="2.8" fill="#b4b4b4"/><rect x="16" y="24.2" width="2" height="1.2" fill="#666"/><rect x="24.5" y="24.2" width="2" height="1.2" fill="#666"/>
</svg>
<div style="position:absolute;left:697px;top:526px;width:144px;height:81px;border:1px solid #A0A0A0;border-radius:4px;box-shadow:inset 1px 1px 0 #fff, inset -1px -1px 0 #fff;box-sizing:border-box"></div>
<div class="t" style="left:726px;width:120px;text-align:center;top:541.5px;font-size:21px;line-height:24px;color:#000">New Item<br>(F3)</div>
<svg style="position:absolute;left:702px;top:550px" width="32" height="32" viewBox="0 0 32 32">
<circle cx="16.5" cy="16.5" r="15" fill="#777" opacity="0.3"/>
<circle cx="15.8" cy="15.5" r="14.6" fill="#8fcc10" stroke="#4f9a10" stroke-width="1.2"/>
<circle cx="15.8" cy="15.5" r="12.6" fill="none" stroke="#c4ea7a" stroke-width="0.8"/>
<path d="M15.8 8 V23 M8.3 15.5 H23.3" stroke="#fff" stroke-width="4.2"/>
</svg>
<div style="position:absolute;left:849px;top:526px;width:144px;height:81px;border:1px solid #A0A0A0;border-radius:4px;box-shadow:inset 1px 1px 0 #fff, inset -1px -1px 0 #fff;box-sizing:border-box"></div>
<div class="t" style="left:878px;width:120px;text-align:center;top:541.5px;font-size:21px;line-height:24px;color:#A3A3A3">Reprint<br>Receipts</div>
<svg style="position:absolute;left:854px;top:550px" width="32" height="32" viewBox="0 0 32 32">
<rect x="6" y="0.5" width="19" height="12" fill="#fff" stroke="#6f6f6f" stroke-width="1.2"/>
<rect x="7.5" y="2" width="16" height="9" fill="#e8e8e8"/>
<rect x="0.8" y="10" width="30.5" height="16" rx="1" fill="#d9d9d9" stroke="#6f6f6f" stroke-width="1.2"/>
<rect x="6" y="10.5" width="19" height="6.5" fill="#808080"/>
<rect x="2" y="14.5" width="28" height="3" fill="#e8e8e8" opacity="0.6"/>
<rect x="6" y="21" width="19" height="10" fill="#fff" stroke="#6f6f6f" stroke-width="1.3"/>
<path d="M8 25 H23 M8 27.6 H23" stroke="#111" stroke-width="1.1"/>
</svg>
<div style="position:absolute;left:697px;top:610px;width:144px;height:81px;border:1px solid #A0A0A0;border-radius:4px;box-shadow:inset 1px 1px 0 #fff, inset -1px -1px 0 #fff;box-sizing:border-box"></div>
<div class="t" style="left:726px;width:120px;text-align:center;top:625.5px;font-size:21px;line-height:24px;color:#000">Switch to<br>Full POS</div>
<svg style="position:absolute;left:702px;top:634px" width="32" height="32" viewBox="0 0 32 32">
<rect x="1.5" y="3" width="30" height="27.5" fill="#8a8a8a" opacity="0.45"/>
<rect x="1.3" y="1.8" width="29" height="26.8" rx="1.2" fill="#fdf9f4" stroke="#1f7fc8" stroke-width="1.4"/>
<rect x="2" y="2.5" width="27.6" height="4" fill="#3393e0"/>
<rect x="3" y="8" width="25.5" height="19" fill="#dedede"/>
<rect x="11.5" y="9" width="16" height="6.5" fill="#fff" stroke="#aaa" stroke-width="0.6"/>
<rect x="11.5" y="18" width="16" height="6.5" fill="#fff" stroke="#aaa" stroke-width="0.6"/>
<path d="M4.5 11.5 H9 M4.5 13.5 H6.5 M7.5 13.5 H9 M4.5 20.5 H7.5 M4.5 22.5 H6.5 M7.5 22.5 H9" stroke="#555" stroke-width="0.9"/>
</svg>
<div style="position:absolute;left:849px;top:610px;width:144px;height:81px;border:1px solid #A0A0A0;border-radius:4px;box-shadow:inset 1px 1px 0 #fff, inset -1px -1px 0 #fff;box-sizing:border-box"></div>
<div class="t" style="left:878px;width:120px;text-align:center;top:637.5px;font-size:21px;line-height:24px;color:#A3A3A3">Close</div>
<svg style="position:absolute;left:854px;top:634px" width="32" height="32" viewBox="0 0 32 32">
<path d="M9.5 0.5 H22.5 L31.5 9.5 V22.5 L22.5 31.5 H9.5 L0.5 22.5 V9.5 Z" fill="#6c6c6c"/>
<path d="M10 2 H22 L30 10 V22 L22 30 H10 L2 22 V10 Z" fill="#8c8c8c" stroke="#a8a8a8" stroke-width="0.6"/>
<path d="M10.5 10.5 L21.5 21.5 M21.5 10.5 L10.5 21.5" stroke="#fff" stroke-width="4.2" stroke-linecap="square"/>
</svg>
</body></html>
